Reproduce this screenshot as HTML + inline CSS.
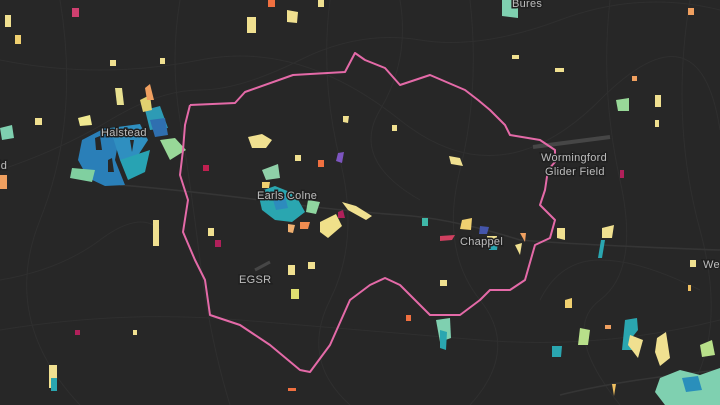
<!DOCTYPE html>
<html><head><meta charset="utf-8">
<style>
html,body{margin:0;padding:0;background:#272727;}
svg{display:block}
text{font-family:"Liberation Sans",sans-serif;font-size:11px;fill:#bdbdbd;stroke:#1f1f1f;stroke-width:3px;paint-order:stroke;letter-spacing:0.3px}
</style></head>
<body>
<svg width="720" height="405" viewBox="0 0 720 405" xmlns="http://www.w3.org/2000/svg">
<rect width="720" height="405" fill="#272727"/>
<g fill="none" stroke="#2f2f2f" stroke-width="1">
<path d="M0 170 Q60 150 110 120 T200 90 T300 60 T420 40 T560 20 T720 10"/>
<path d="M180 0 Q170 60 180 120 T200 260 T230 405"/>
<path d="M330 0 Q320 80 340 160 T330 300 T350 405"/>
<path d="M470 0 Q480 90 460 170 T480 300 T470 405"/>
<path d="M610 0 Q600 90 620 180 T600 300 T620 405"/>
<path d="M0 330 Q120 310 240 320 T480 340 T720 320"/>
<path d="M0 60 Q100 80 200 60 T400 120 T600 100 T720 130"/>
<path d="M60 0 Q80 120 40 220 T80 405"/>
<path d="M690 0 Q670 120 700 230 T680 405"/>
<path d="M400 0 Q410 60 380 110 T420 200"/>
<path d="M540 300 Q560 260 600 260 T700 290"/>
<path d="M0 280 Q60 270 100 240 T160 230"/>
</g>
<g fill="none" stroke="#353535" stroke-width="1.6">
<path d="M120 185 Q180 190 260 200 Q330 210 400 215 Q450 218 520 240 Q580 245 720 250"/>
<path d="M560 395 Q620 380 720 370"/>
</g>
<path d="M533 147 L610 137" stroke="#464646" stroke-width="4"/>
<path d="M255 270 L270 262" stroke="#464646" stroke-width="3"/>
<g>
<!-- Halstead cluster -->
<path d="M82 140 L105 128 L120 133 L115 160 L125 185 L105 186 L88 178 L78 160Z" fill="#2a7fb8"/>
<path d="M110 128 L140 124 L148 140 L135 160 L120 160Z" fill="#2f8fc0"/>
<path d="M120 160 L150 150 L145 172 L128 180Z" fill="#28a3b3"/>
<path d="M95 138 L100 136 L102 150 L96 150Z M108 160 L112 158 L114 172 L108 172Z M130 140 L134 140 L132 152Z" fill="#272727"/>
<path d="M72 168 L95 170 L92 182 L70 178Z" fill="#80d0a0"/>
<path d="M145 110 L160 106 L168 128 L150 130Z" fill="#2d9bb5"/>
<path d="M115 88 L122 88 L124 105 L117 105Z" fill="#e8e090"/>
<path d="M140 100 L150 95 L152 110 L143 112Z" fill="#e0d070"/>
<path d="M160 140 L175 138 L186 150 L170 160Z" fill="#98d898"/>
<path d="M150 120 L165 118 L168 135 L155 137Z" fill="#2f6fb0"/>
<path d="M78 118 L90 115 L92 125 L80 126Z" fill="#f0e890"/>
<path d="M145 88 L150 84 L154 100 L147 100Z" fill="#f0a060"/>
<!-- Earls Colne cluster -->
<path d="M258 192 L275 186 L295 194 L305 212 L292 222 L275 220 L262 210Z" fill="#2aa6b0"/>
<path d="M272 196 L284 193 L288 208 L276 210Z" fill="#2d8bbd"/>
<path d="M308 200 L320 202 L316 214 L306 212Z" fill="#8fd6a0"/>
<path d="M320 222 L336 214 L342 226 L328 238 L320 232Z" fill="#f0e08a"/>
<path d="M342 202 L356 206 L372 216 L366 220 L348 210Z" fill="#f0e090"/>
<path d="M300 222 L310 222 L308 229 L300 229Z" fill="#f08c50"/>
<path d="M262 170 L278 164 L280 178 L266 180Z" fill="#8fd0a8"/>
<path d="M262 182 L270 182 L269 188 L262 188Z" fill="#f0d070"/>
<path d="M338 212 L343 210 L345 218 L338 218Z" fill="#b0205a"/>
<path d="M288 224 L295 225 L293 233 L288 232Z" fill="#f0b070"/>
<path d="M248 137 L262 134 L272 140 L266 148 L252 148Z" fill="#f0e090"/>
<!-- Chappel -->
<path d="M462 220 L472 218 L471 230 L460 229Z" fill="#f0d070"/>
<path d="M480 226 L489 227 L487 234 L479 234Z" fill="#4455aa"/>
<path d="M487 236 L497 236 L496 248 L488 247Z" fill="#f0e090"/>
<path d="M440 236 L455 235 L452 240 L440 241Z" fill="#d04060"/>
<path d="M490 242 L498 242 L497 250 L489 250Z" fill="#2aa6b0"/>
<path d="M422 218 L428 218 L428 226 L422 226Z" fill="#3fb8a8"/>
<path d="M515 245 L522 243 L520 255Z" fill="#f0e090"/>
<path d="M520 233 L526 233 L525 242Z" fill="#f0a060"/>
<path d="M557 228 L565 228 L565 240 L557 238Z" fill="#f0e090"/>
<path d="M602 228 L614 225 L612 238 L602 238Z" fill="#f0e090"/>
<path d="M601 240 L605 240 L602 258 L598 258Z" fill="#2aa6b0"/>
<!-- Bottom right -->
<path d="M660 378 L680 370 L700 375 L720 368 L720 405 L665 405 L655 392Z" fill="#7fd0b0"/>
<path d="M682 378 L698 376 L702 390 L686 392Z" fill="#2a8fbb"/>
<path d="M625 320 L637 318 L638 330 L630 340 L632 350 L622 350Z" fill="#2aa6b0"/>
<path d="M630 335 L643 340 L638 358 L628 345Z" fill="#f0e090"/>
<path d="M657 338 L666 332 L670 358 L660 366 L655 352Z" fill="#f0e090"/>
<path d="M580 328 L590 330 L588 345 L578 345Z" fill="#b8e08a"/>
<path d="M552 346 L562 346 L561 357 L552 357Z" fill="#2aa6b0"/>
<path d="M565 300 L572 298 L572 308 L565 308Z" fill="#f0d070"/>
<path d="M612 384 L616 384 L614 396Z" fill="#f0c060"/>
<path d="M700 345 L712 340 L715 355 L702 357Z" fill="#b8e08a"/>
<path d="M436 320 L450 318 L451 338 L440 342Z" fill="#7fd0b0"/>
<path d="M440 330 L447 332 L446 350 L440 348Z" fill="#2aa6b0"/>
<!-- scattered -->
<path d="M0 128 L12 125 L14 138 L2 140Z" fill="#7fd0b0"/>
<path d="M0 175 L7 175 L7 189 L0 189Z" fill="#f0a060"/>
<path d="M153 220 L159 220 L159 246 L153 246Z" fill="#f0e090"/>
<path d="M49 365 L57 365 L57 388 L49 388Z" fill="#f0e090"/>
<path d="M51 378 L57 378 L57 391 L51 391Z" fill="#2aa6b0"/>
<path d="M208 228 L214 228 L214 236 L208 236Z" fill="#f0e090"/>
<path d="M215 240 L221 240 L221 247 L215 247Z" fill="#b0205a"/>
<path d="M203 165 L209 165 L209 171 L203 171Z" fill="#c02050"/>
<path d="M295 155 L301 155 L301 161 L295 161Z" fill="#f0e090"/>
<path d="M318 160 L324 160 L324 167 L318 167Z" fill="#f07040"/>
<path d="M338 153 L344 152 L342 163 L336 161Z" fill="#7d55c0"/>
<path d="M343 116 L349 116 L348 123 L343 122Z" fill="#f0e090"/>
<path d="M392 125 L397 125 L397 131 L392 131Z" fill="#f0e090"/>
<path d="M449 156 L460 158 L463 166 L451 164Z" fill="#f0e090"/>
<path d="M288 265 L295 265 L295 275 L288 275Z" fill="#f0e090"/>
<path d="M291 289 L299 289 L299 299 L291 299Z" fill="#e0e070"/>
<path d="M308 262 L315 262 L315 269 L308 269Z" fill="#f0e090"/>
<path d="M440 280 L447 280 L447 286 L440 286Z" fill="#f0e090"/>
<path d="M406 315 L411 315 L411 321 L406 321Z" fill="#f07040"/>
<path d="M288 388 L296 388 L296 391 L288 391Z" fill="#f07040"/>
<path d="M75 330 L80 330 L80 335 L75 335Z" fill="#b0205a"/>
<path d="M35 118 L42 118 L42 125 L35 125Z" fill="#f0e090"/>
<path d="M160 58 L165 58 L165 64 L160 64Z" fill="#f0e090"/>
<path d="M110 60 L116 60 L116 66 L110 66Z" fill="#f0e090"/>
<path d="M72 8 L79 8 L79 17 L72 17Z" fill="#d04070"/>
<path d="M5 15 L11 15 L11 27 L5 27Z" fill="#f0e090"/>
<path d="M15 35 L21 35 L21 44 L15 44Z" fill="#f0d070"/>
<path d="M247 17 L256 17 L256 33 L247 33Z" fill="#f0e090"/>
<path d="M268 0 L275 0 L275 7 L268 7Z" fill="#f07040"/>
<path d="M287 10 L298 12 L297 23 L287 22Z" fill="#f0e090"/>
<path d="M318 0 L324 0 L324 7 L318 7Z" fill="#f0e090"/>
<path d="M502 0 L518 0 L518 18 L502 16Z" fill="#7fd0b0"/>
<path d="M512 55 L519 55 L519 59 L512 59Z" fill="#f0e090"/>
<path d="M555 68 L564 68 L564 72 L555 72Z" fill="#f0e090"/>
<path d="M632 76 L637 76 L637 81 L632 81Z" fill="#f0a060"/>
<path d="M616 100 L629 98 L629 111 L618 111Z" fill="#98d898"/>
<path d="M655 95 L661 95 L661 107 L655 107Z" fill="#f0e090"/>
<path d="M688 8 L694 8 L694 15 L688 15Z" fill="#f0a060"/>
<path d="M655 120 L659 120 L659 127 L655 127Z" fill="#f0e090"/>
<path d="M620 170 L624 170 L624 178 L620 178Z" fill="#b0205a"/>
<path d="M688 285 L691 285 L691 291 L688 291Z" fill="#f0c060"/>
<path d="M605 325 L611 325 L611 329 L605 329Z" fill="#f0a060"/>
<path d="M690 260 L696 260 L696 267 L690 267Z" fill="#f0e090"/>
<path d="M133 330 L137 330 L137 335 L133 335Z" fill="#f0e090"/>
</g>
<polyline fill="none" stroke="#e46aa8" stroke-width="2" stroke-linejoin="round" points="190,105 235,103 245,92 293,75 345,72 355,53 365,60 385,68 400,85 430,75 465,90 478,100 490,110 505,125 510,135 540,140 555,150 555,162 548,170 545,190 540,205 555,220 550,238 535,245 525,280 510,290 490,290 480,300 460,315 430,315 415,300 400,285 385,278 370,285 350,300 330,345 310,372 300,370 270,345 240,325 210,315 205,280 195,260 183,232 188,200 180,175 183,150 185,125 190,105"/>
<text x="101" y="136">Halstead</text>
<text x="257" y="199">Earls Colne</text>
<text x="460" y="245">Chappel</text>
<text x="239" y="283">EGSR</text>
<text x="541" y="161">Wormingford</text>
<text x="545" y="175">Glider Field</text>
<text x="703" y="268">We</text>
<text x="512" y="7">Bures</text>
<text x="-2" y="169">ld</text>
</svg>
</body></html>
